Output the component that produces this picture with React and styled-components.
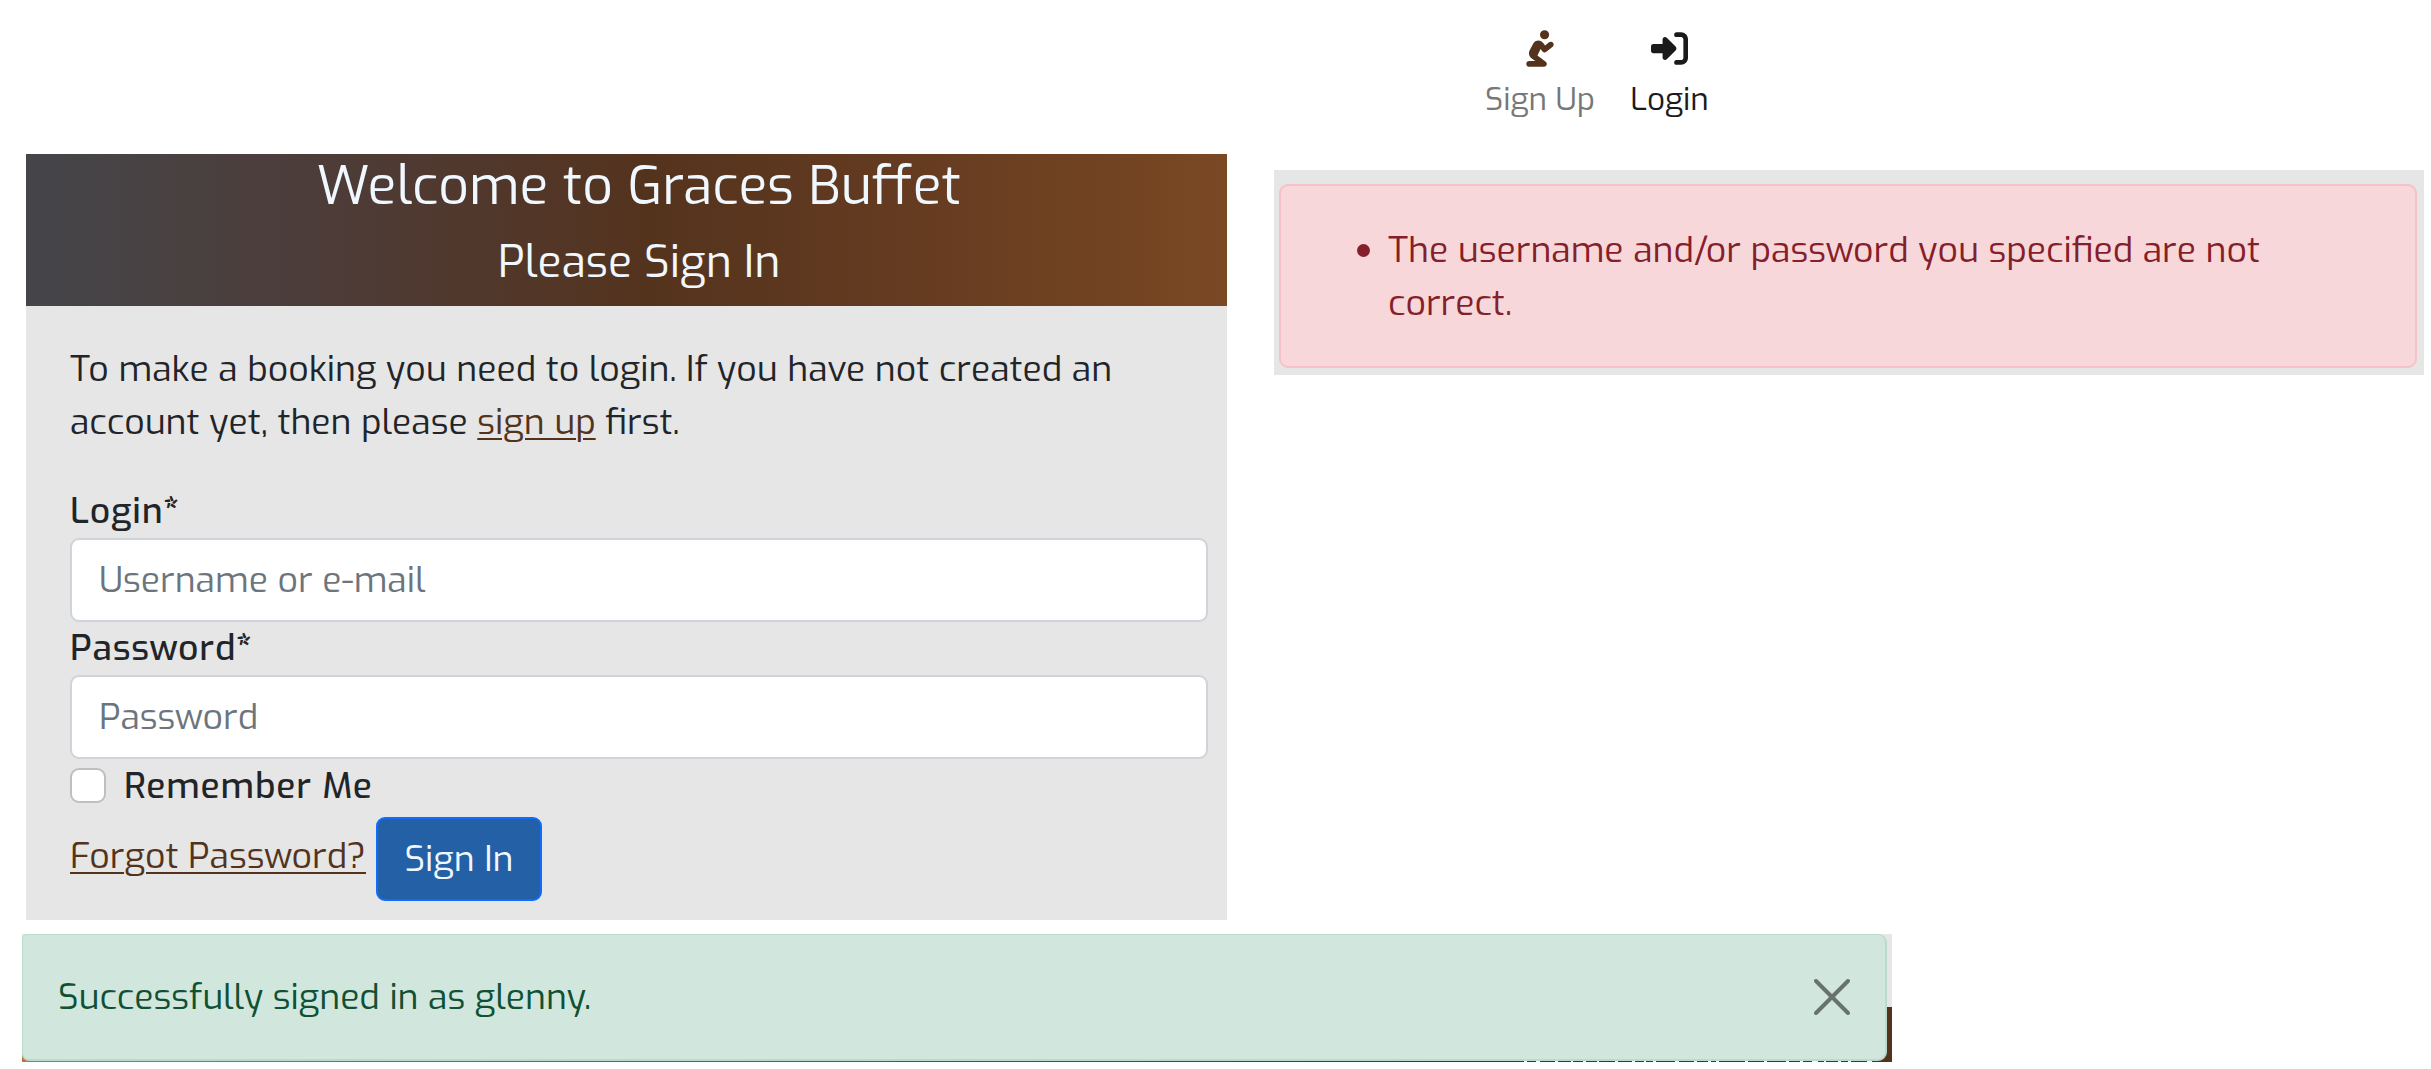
import React from 'react';
import styled, { createGlobalStyle } from 'styled-components';
import { FaPersonPraying, FaRightToBracket } from 'react-icons/fa6';

const GlobalStyle = createGlobalStyle`
  *, *::before, *::after { box-sizing: border-box; }
  body {
    margin: 0;
    background: #fff;
    color: #212529;
    font-family: Exo, "Exo 2", Roboto, sans-serif;
    font-size: 35.55px;
    font-weight: 400;
    line-height: 53.33px;
  }
`;

const Page = styled.div`
  width: 2431px;
  height: 1069px;
  overflow: hidden;
`;

const Nav = styled.nav`
  display: flex;
  gap: 36px;
  height: 154px;
  padding: 30px 0 0 1485px;
`;

const NavItem = styled.a`
  display: flex;
  flex-direction: column;
  align-items: center;
  width: ${(p) => p.$width}px;
  color: ${(p) => p.$color};
  font-size: 31.4px;
  line-height: 40px;
  white-space: nowrap;
  svg {
    display: block;
    width: ${(p) => p.$iconWidth}px;
    height: 37px;
    margin-bottom: 13px;
    color: ${(p) => p.$iconColor};
  }
`;

const Columns = styled.main`
  display: grid;
  grid-template-columns: 1201px 1150px;
  column-gap: 47px;
  align-items: start;
  height: 780px;
  padding-left: 26px;
`;

const Card = styled.section`
  height: 766px;
  background: #e6e6e6;
`;

const CardHeader = styled.header`
  height: 152px;
  padding: 1px 0 0 25px;
  background: linear-gradient(90deg, #45454a 0%, #4e3b36 28%, #54331d 52%, #663c21 75%, #7a4823 100%);
  color: #f0f8ff;
  text-align: center;
`;

const Title = styled.h1`
  margin: 0;
  font-size: 53.33px;
  font-weight: 400;
  line-height: 62px;
`;

const Subtitle = styled.h2`
  margin: 0;
  padding-top: 18px;
  font-size: 44.44px;
  font-weight: 400;
  line-height: 54px;
`;

const CardBody = styled.div`
  padding: 37px 19px 0 44px;
`;

const Intro = styled.p`
  margin: 0 0 35px;
`;

const Link = styled.a`
  color: #54331d;
  text-decoration: underline;
  text-decoration-thickness: 2px;
  text-underline-offset: 4px;
`;

const Label = styled.label`
  display: block;
  height: 53px;
  font-weight: 500;
  line-height: 53px;
  letter-spacing: 0.8px;
`;

const Required = styled.span`
  font-weight: 700;
`;

const Input = styled.input`
  display: block;
  width: 100%;
  height: 84px;
  padding: 0 27px;
  border: 2px solid #ced4da;
  border-radius: 9px;
  background: #fff;
  color: #212529;
  font: inherit;
  outline: none;
  &::placeholder {
    color: #6c757d;
    opacity: 1;
  }
`;

const Remember = styled.div`
  display: flex;
  align-items: center;
  gap: 18px;
  height: 54px;
  padding-top: 1px;
`;

const Checkbox = styled.input`
  appearance: none;
  width: 36px;
  height: 35px;
  margin: 0 0 1px;
  border: 2px solid #bfbfbf;
  border-radius: 9px;
  background: #fff;
`;

const Actions = styled.div`
  display: flex;
  align-items: flex-start;
  gap: 10px;
  padding-top: 4px;
`;

const Forgot = styled.div`
  width: 296px;
  padding-top: 13px;
  white-space: nowrap;
`;

const Button = styled.button`
  width: 166px;
  height: 84px;
  padding: 2px 0 0;
  border: 2px solid #0d6efd;
  border-radius: 9px;
  background: #2460a5;
  color: #f0f8ff;
  font: inherit;
`;

const ErrorPanel = styled.aside`
  height: 205px;
  margin-top: 16px;
  padding: 14px 7px 7px 5px;
  background: #e6e6e6;
`;

const ErrorAlert = styled.div`
  height: 184px;
  padding: 38px 110px 0 107px;
  border: 2px solid #f5c2c7;
  border-radius: 9px;
  background: #f8d7da;
  color: #842029;
`;

const ErrorList = styled.ul`
  margin: 0;
  padding: 0;
  list-style: none;
`;

const ErrorItem = styled.li`
  position: relative;
  &::before {
    content: "";
    position: absolute;
    top: 20px;
    left: -31px;
    width: 13px;
    height: 13px;
    border-radius: 50%;
    background: currentColor;
  }
`;

const glints = [
  [1502, 3], [1514, 4], [1533, 3], [1549, 2], [1561, 3], [1575, 2], [1593, 3], [1610, 3],
  [1622, 2], [1631, 3], [1653, 4], [1672, 3], [1686, 3], [1694, 3], [1723, 3], [1742, 3],
  [1764, 3], [1778, 3], [1790, 6], [1802, 2], [1816, 3], [1826, 3], [1845, 5],
];
const glintStops = glints
  .map(([x, w]) => `transparent ${x}px, #f0f8ff ${x}px ${x + w}px, transparent ${x + w}px`)
  .join(', ');

const SuccessWrap = styled.section`
  width: 1870px;
  height: 128px;
  margin-left: 22px;
  padding: 0 5px 1px 0;
  background:
    linear-gradient(90deg, ${glintStops}) 0 127px / 1870px 1px no-repeat,
    linear-gradient(90deg, #c2703a 0%, #54331d 75%) 0 73px / 100% 55px no-repeat,
    #e6e6e6;
`;

const SuccessAlert = styled.div`
  display: flex;
  align-items: center;
  justify-content: space-between;
  height: 127px;
  padding: 0 35px 0 35px;
  border: solid #badbcc;
  border-width: 1px 2px 2px 1px;
  border-radius: 5px 9px 9px 7px;
  background: #d1e7dd;
  color: #0f5132;
`;

const Message = styled.span`
  padding-top: 2px;
`;

const CloseIcon = styled.svg`
  display: block;
  width: 36px;
  height: 36px;
`;

export default function App() {
  return (
    <>
      <GlobalStyle />
      <Page>
        <Nav>
          <NavItem $width={110} $color="#777" $iconColor="#54331d" $iconWidth={32}>
            <FaPersonPraying />
            Sign Up
          </NavItem>
          <NavItem $width={77} $color="#1a1a1a" $iconColor="#1a1a1a" $iconWidth={37}>
            <FaRightToBracket />
            Login
          </NavItem>
        </Nav>
        <Columns>
          <Card>
            <CardHeader>
              <Title>Welcome to Graces Buffet</Title>
              <Subtitle>Please Sign In</Subtitle>
            </CardHeader>
            <CardBody>
              <Intro>
                To make a booking you need to login. If you have not created an
                <br />
                account yet, then please <Link>sign up</Link> first.
              </Intro>
              <Label>Login<Required>*</Required></Label>
              <Input type="text" placeholder="Username or e-mail" />
              <Label>Password<Required>*</Required></Label>
              <Input type="password" placeholder="Password" />
              <Remember>
                <Checkbox type="checkbox" id="remember" />
                <Label htmlFor="remember">Remember Me</Label>
              </Remember>
              <Actions>
                <Forgot><Link>Forgot Password?</Link></Forgot>
                <Button type="button">Sign In</Button>
              </Actions>
            </CardBody>
          </Card>
          <ErrorPanel>
            <ErrorAlert>
              <ErrorList>
                <ErrorItem>
                  The username and/or password you specified are not
                  <br />
                  correct.
                </ErrorItem>
              </ErrorList>
            </ErrorAlert>
          </ErrorPanel>
        </Columns>
        <SuccessWrap>
          <SuccessAlert>
            <Message>Successfully signed in as glenny.</Message>
            <CloseIcon viewBox="0 0 36 36">
              <path d="M2 2 34 34M34 2 2 34" stroke="#68736e" strokeWidth="4" strokeLinecap="round" fill="none" />
            </CloseIcon>
          </SuccessAlert>
        </SuccessWrap>
      </Page>
    </>
  );
}
